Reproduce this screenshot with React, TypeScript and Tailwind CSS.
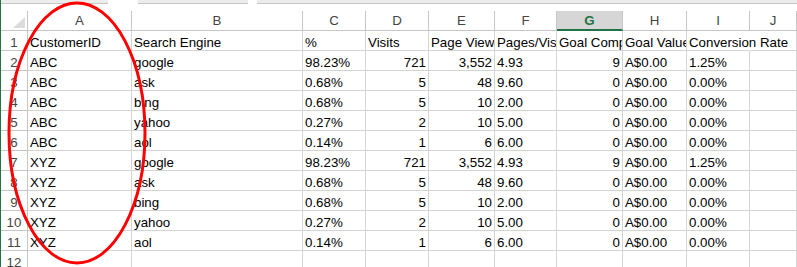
const cols = ["A", "B", "C", "D", "E", "F", "G", "H", "I", "J"];

type Row = string[];

const header: Row = ["CustomerID", "Search Engine", "%", "Visits", "Page Views", "Pages/Visit", "Goal Completions", "Goal Value", "Conversion Rate", ""];

const engines = [
  ["google", "98.23%", "721", "3,552", "4.93", "9", "A$0.00", "1.25%"],
  ["ask", "0.68%", "5", "48", "9.60", "0", "A$0.00", "0.00%"],
  ["bing", "0.68%", "5", "10", "2.00", "0", "A$0.00", "0.00%"],
  ["yahoo", "0.27%", "2", "10", "5.00", "0", "A$0.00", "0.00%"],
  ["aol", "0.14%", "1", "6", "6.00", "0", "A$0.00", "0.00%"],
];

const rows: Row[] = [
  header,
  ...engines.map((e) => ["ABC", ...e, ""]),
  ...engines.map((e) => ["XYZ", ...e, ""]),
  ["", "", "", "", "", "", "", "", "", ""],
];

const rightAligned = [3, 4, 6];

const gridCols =
  "grid grid-cols-[27px_104px_171px_63px_63px_66px_62px_66px_64px_63px_1fr]";

const cell =
  "h-[20px] flex items-end px-[2px] whitespace-nowrap border-b border-r border-[#d4d4d4] text-black leading-[15px]";

export default function App() {
  return (
    <div
      className="relative w-[797px] h-[267px] overflow-hidden bg-white border-l border-[#217346] text-[13.3px]"
      style={{ fontFamily: '"Liberation Sans", Arial, sans-serif' }}
    >
      {/* bottom edge of the formula bar */}
      <div className="flex h-[4px]">
        <div className="w-[107px] bg-[#ececec] border-b border-[#c6c6c6]" />
        <div className="w-[30px]" />
        <div className="w-[110px] bg-[#ececec] border-b border-[#c6c6c6]" />
        <div className="w-[9px]" />
        <div className="flex-1 bg-[#ececec] border-b border-[#c6c6c6]" />
      </div>
      <div className="h-[7px]" />

      {/* column headers */}
      <div className={gridCols}>
        <div className="h-[20px] relative border-b border-r border-[#c6c6c6]">
          <svg className="absolute left-[12px] top-[6px]" width="12" height="11" viewBox="0 0 12 11">
            <polygon points="0,11 12,11 12,0" fill="#dcdcdc" />
          </svg>
        </div>
        {cols.map((c) =>
          c === "G" ? (
            <div
              key={c}
              className="h-[20px] flex items-end justify-center pb-[1px] bg-[#d6d6d6] border-b-2 border-r border-b-[#217346] border-r-[#c6c6c6] text-[#217346] font-bold leading-[15px]"
            >
              {c}
            </div>
          ) : (
            <div
              key={c}
              className="h-[20px] flex items-end justify-center pb-[2px] border-b border-r border-[#c6c6c6] text-[#444444] leading-[15px]"
            >
              {c}
            </div>
          )
        )}
      </div>

      {/* data rows */}
      {rows.map((r, i) => (
        <div key={i} className={gridCols}>
          <div className="h-[20px] flex items-end justify-center border-b border-r border-[#c6c6c6] text-[#444444] leading-[15px]">
            {i + 1}
          </div>
          {r.map((v, j) => {
            const overflowRight = i === 0 && j === 8;
            return (
              <div
                key={j}
                className={
                  cell +
                  (i > 0 && rightAligned.includes(j) ? " justify-end" : "") +
                  (overflowRight ? " overflow-visible border-r-white relative z-10" : " overflow-hidden")
                }
              >
                {v}
              </div>
            );
          })}
        </div>
      ))}

      {/* red hand-drawn circle around column A */}
      <svg className="absolute left-0 top-0 pointer-events-none z-20" width="797" height="267">
        <ellipse cx="76" cy="133" rx="68" ry="130" fill="none" stroke="#ff0000" strokeWidth="3" />
      </svg>
    </div>
  );
}
